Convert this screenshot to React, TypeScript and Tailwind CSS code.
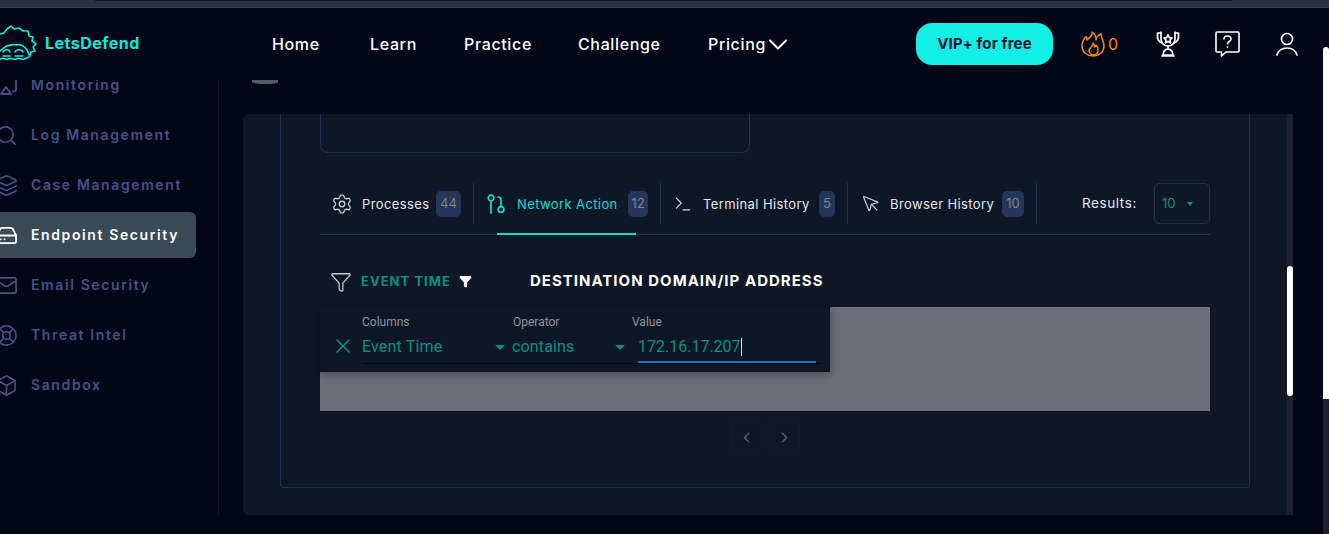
import { Box, ChevronLeft, ChevronRight, Filter, HardDrive, Layers, LifeBuoy, Mail, MousePointer, Search, Settings, Terminal, X } from "lucide-react";
import type { ReactNode } from "react";

const montserrat = "font-['Inter','Liberation_Sans',sans-serif]";

function Logo() {
  return (
    <svg width="38" height="40" viewBox="0 0 38 40" fill="none" stroke="#0fe8d8" strokeWidth="1.6" strokeLinejoin="round" strokeLinecap="round" className="mt-[-4px] shrink-0">
      <path d="M0 13 L4 12 L7 8 L11 5 L14 8 L19 7 L23 10 L28 10 L29 15 L33 16 L32 20 L36 23 L33 26 L35 30 L31 31 L30 35" />
      <path d="M0 30 C6 24 12 23 16 24 C22 22 28 28 29 34" />
      <path d="M3 31 C4 28 9 28 10 31 M3 35 H10 M15 31 C16 28 22 28 23 31 M15 35 H23" />
      <path d="M0 38 C3 36 5 39 8 38 C10 36 13 39 16 38 C18 36 21 39 24 38 L29 36" />
    </svg>
  );
}

function NetworkIcon() {
  return (
    <svg width="18" height="20" viewBox="0 0 18 20" fill="none" stroke="#0fdcd0" strokeWidth="1.7" strokeLinecap="round" className="shrink-0">
      <circle cx="4" cy="4" r="2.8" />
      <path d="M4 7v12" />
      <circle cx="14" cy="15.5" r="2.8" />
      <path d="M14 12.5V6c0-2-1-3-3-3" />
    </svg>
  );
}

function FlameIcon() {
  return (
    <svg width="24" height="26" viewBox="0 0 24 26" fill="none" stroke="#f08a1d" strokeWidth="1.5" strokeLinejoin="round" className="shrink-0">
      <path d="M11 1C12 5 8 7 6 9C6 7 5.500 6 5 5.500C2 9 1 12 1 15C1 21 6 25 12 25C18 25 23 21 23 15C23 10 20 7 20 3C17 4 15 7 15 9C15 6 14 3 11 1Z" />
      <path d="M12 12C13 15 9 16 8 19C8 22 10 24 12 24C15 24 17 22 17 19C17 17 16 15 15 14C15 15 14 16 13.500 16C14 14 13 13 12 12Z" />
    </svg>
  );
}

function TrophyIcon() {
  return (
    <svg width="24" height="26" viewBox="0 0 24 26" fill="none" stroke="#fff" strokeWidth="1.7" strokeLinejoin="round" strokeLinecap="round">
      <path d="M5 1v7c0 4 3 7 7 7s7-3 7-7V1" />
      <path d="M5 2H1.500v4c0 3 2 5 4.500 6M19 2h3.500v4c0 3-2 5-4.500 6" />
      <path d="M12 4l1.300 2.600 2.700.4-2 2 .5 2.800L12 10.500 9.500 11.800l.5-2.800-2-2 2.700-.4z" />
      <path d="M12 15v3M7 24c0-3 2-6 5-6s5 3 5 6zM6 25h12" />
    </svg>
  );
}

function QuestionIcon() {
  return (
    <svg width="25" height="26" viewBox="0 0 25 26" fill="none" stroke="#fff" strokeWidth="1.600" strokeLinejoin="round" strokeLinecap="round">
      <path d="M2 1h21a1 1 0 0 1 1 1v18a1 1 0 0 1-1 1H11l-4.500 4v-4H2a1 1 0 0 1-1-1V2a1 1 0 0 1 1-1z" />
      <path d="M9 8c0-2 1.500-3 3.500-3s3.500 1.200 3.500 3c0 2.500-3.500 2.500-3.500 5" />
      <path d="M12.500 16v.5" />
    </svg>
  );
}

function UserIcon() {
  return (
    <svg width="22" height="24" viewBox="0 0 22 24" fill="none" stroke="#fff" strokeWidth="1.700" strokeLinecap="round">
      <circle cx="11" cy="7" r="5.500" />
      <path d="M1 23c1.500-5 5-7 10-7s8.500 2 10 7" />
    </svg>
  );
}

function MonitoringIcon() {
  return (
    <svg width="20" height="20" viewBox="0 0 20 20" fill="none" stroke="#3f5488" strokeWidth="1.800" strokeLinejoin="round" strokeLinecap="round" className="shrink-0">
      <path d="M4 19l5-7 5 7zM19 5v10c0 1-1 1.500-3 1.500" />
    </svg>
  );
}

const navItems = [
  { label: "Home", width: "w-[50px]" },
  { label: "Learn", width: "w-[46px]" },
  { label: "Practice", width: "w-[66px]" },
  { label: "Challenge", width: "w-[82px]" },
];

const sideItems: { label: string; icon: ReactNode; active?: boolean }[] = [
  { label: "Monitoring", icon: <MonitoringIcon /> },
  { label: "Log Management", icon: <Search size={23} strokeWidth={1.7} /> },
  { label: "Case Management", icon: <Layers size={23} strokeWidth={1.7} /> },
  { label: "Endpoint Security", icon: <HardDrive size={23} strokeWidth={1.9} />, active: true },
  { label: "Email Security", icon: <Mail size={23} strokeWidth={1.7} /> },
  { label: "Threat Intel", icon: <LifeBuoy size={23} strokeWidth={1.7} /> },
  { label: "Sandbox", icon: <Box size={23} strokeWidth={1.7} /> },
];

function Tab({ icon, label, count, iconWidth, textWidth, badgeWidth, gapBefore, active }: { icon: ReactNode; label: string; count: number; iconWidth: string; textWidth: string; badgeWidth: string; gapBefore: string; active?: boolean }) {
  return (
    <div className={`relative flex h-[41px] items-center border-r border-[#1f3350] ${gapBefore}`}>
      <div className={`flex items-center ${iconWidth}`}>{icon}</div>
      <span className={`pt-[2px] text-[13px] tracking-[0.03em] whitespace-nowrap ${textWidth} ${active ? "text-[#0fdcd0]" : "text-[#e4e7ec]"}`}>{label}</span>
      <span className={`flex h-[26px] items-center justify-center rounded-[5px] bg-[#24375a] text-[13px] text-[#7f838c] ${badgeWidth}`}>{count}</span>
      {active && <div className="absolute bottom-[-11px] left-[23px] h-[2px] w-[139px] bg-[#0fdcd0]" />}
    </div>
  );
}

export default function App() {
  return (
    <div className={`flex h-[534px] w-[1329px] flex-col overflow-hidden bg-[#030617] ${montserrat}`}>
      <div className="h-[8px] shrink-0 border-b border-[#3a3f4d] bg-[#2c303d] pl-[95px] pr-[97px]">
        <div className="h-[1px] bg-[#14161f]" />
      </div>
      <div className="flex min-h-0 flex-1">
        <div className="flex min-w-0 flex-1 flex-col">
          <header className="relative z-10 flex h-[72px] shrink-0 items-center bg-[#030617]">
            <div className="flex w-[272px] shrink-0 items-center gap-[7px] self-stretch pb-[3px]">
              <Logo />
              <span className="text-[16px] font-bold tracking-[0.03em] text-[#0fe8d8]">LetsDefend</span>
            </div>
            <nav className="flex flex-1 items-center gap-[48px] text-[16px] font-medium tracking-[0.04em] text-white">
              {navItems.map((item) => (
                <span key={item.label} className={`whitespace-nowrap ${item.width}`}>{item.label}</span>
              ))}
              <span className="flex items-center gap-[4px]">
                <span className="w-[57px]">Pricing</span>
                <svg width="18" height="11" viewBox="0 0 18 11" fill="none" stroke="#fff" strokeWidth="2" strokeLinecap="round" strokeLinejoin="round">
                  <path d="M1 1.500L9 9.500L17 1.500" />
                </svg>
              </span>
            </nav>
            <button className="flex h-[42px] w-[137px] shrink-0 items-center justify-center rounded-[16px] bg-[#12efe4] text-[15px] font-bold tracking-[0.01em] text-[#0a1530]">
              VIP+ for free
            </button>
            <div className="ml-[28px] flex w-[38px] shrink-0 items-center gap-[3px] text-[16px] text-[#f08a1d]">
              <FlameIcon />
              <span>0</span>
            </div>
            <div className="ml-[37px] flex shrink-0 items-center">
              <TrophyIcon />
              <div className="ml-[35px]"><QuestionIcon /></div>
              <div className="ml-[36px] mr-[25px]"><UserIcon /></div>
            </div>
          </header>

          <div className="flex min-h-0 flex-1">
            <aside className="mb-[19px] w-[219px] shrink-0 border-r border-[#0e1726]">
              <div className="mt-[-20px]">
                {sideItems.map((item) => (
                  <div key={item.label} className="h-[50px] py-[2px]">
                    <div className={`flex h-[46px] w-[196px] items-center gap-[13px] rounded-r-[6px] ${item.active ? "bg-[#3a4a57] text-white" : "text-[#3f5488]"}`}>
                      <span className="ml-[-5px] flex w-[23px] shrink-0 justify-center">{item.icon}</span>
                      <span className="pb-[2px] text-[14px] font-semibold tracking-[0.115em] whitespace-nowrap">{item.label}</span>
                    </div>
                  </div>
                ))}
              </div>
            </aside>

            <main className="flex min-w-0 flex-1 flex-col pl-[24px] pr-[30px]">
              <div className="h-[34px] shrink-0">
                <div className="ml-[9px] h-[4px] w-[26px] rounded-b-[100%] bg-[#565965]" />
              </div>
              <div className="mb-[19px] flex min-h-0 flex-1 overflow-hidden rounded-l-[6px] bg-[#0e1726]">
                <div className="min-w-0 flex-1 pl-[37px] pr-[37px]">
                  <div className="h-[374px] rounded-b-[4px] border-x border-b border-[#1f3350] px-[39px]">
                    <div className="h-[39px] w-[430px] rounded-b-[8px] border-x border-b border-[#1f3350]" />

                    <div className="mt-[30px] flex h-[52px] items-start border-b border-[#1f3350]">
                      <Tab icon={<Settings size={22} strokeWidth={1.5} className="text-[#c6cad1]" />} label="Processes" count={44} gapBefore="pl-[11px] pr-[12px]" iconWidth="w-[31px]" textWidth="w-[74px]" badgeWidth="w-[25px]" />
                      <Tab icon={<NetworkIcon />} label="Network Action" count={12} active gapBefore="pl-[13px] pr-[12px]" iconWidth="w-[30px]" textWidth="w-[111px]" badgeWidth="w-[20px]" />
                      <Tab icon={<Terminal size={20} strokeWidth={1.5} className="text-[#d5d8de]" />} label="Terminal History" count={5} gapBefore="pl-[12px] pr-[12px]" iconWidth="w-[30px]" textWidth="w-[116px]" badgeWidth="w-[16px]" />
                      <Tab icon={<MousePointer size={20} strokeWidth={1.5} className="text-[#c6cad1]" />} label="Browser History" count={10} gapBefore="pl-[13px] pr-[12px]" iconWidth="w-[29px]" textWidth="w-[112px]" badgeWidth="w-[22px]" />
                      <span className="ml-auto flex h-[41px] items-center text-[13.500px] tracking-[0.045em] text-[#e4e7ec]">Results:</span>
                      <div className="ml-[17px] flex h-[41px] w-[56px] items-center rounded-[5px] border border-[#1f3350] pl-[7px] text-[13px] text-[#0b8f80]">
                        10
                        <span className="ml-[11px] mt-[1px] h-0 w-0 border-x-[3.500px] border-t-[4px] border-x-transparent border-t-[#0b8f80]" />
                      </div>
                    </div>

                    <div className="flex h-[72px] items-center pl-[10px] pt-[21px]">
                      <Filter size={22} strokeWidth={1.4} className="text-[#c6cad1]" />
                      <span className="ml-[9px] text-[13px] font-bold tracking-[0.08em] whitespace-nowrap text-[#0b8f80]">EVENT TIME</span>
                      <Filter size={13} fill="#fff" className="ml-[8px] text-white" />
                      <span className="ml-[58px] text-[15px] font-bold tracking-[0.068em] whitespace-nowrap text-white">DESTINATION DOMAIN/IP ADDRESS</span>
                    </div>

                    <div className="relative h-[104px] bg-[#6b6e78]">
                      <div className="absolute left-0 top-0 flex h-[65px] w-[510px] items-start bg-[#0e1726] pt-[8px] font-['Roboto',sans-serif] shadow-[0_2px_8px_rgba(0,0,0,0.35)]">
                        <div className="mt-[19px] flex h-[24px] w-[42px] items-center pl-[11px]">
                          <X size={24} strokeWidth={1.5} className="shrink-0 text-[#0b8f80]" />
                        </div>
                        <div className="relative w-[150px] border-b border-[#05080f]">
                          <div className="text-[12px] leading-[14px] text-[#8e93a0]">Columns</div>
                          <div className="mt-[5px] flex h-[29px] items-center pb-[4px] text-[16px] tracking-[0.01em] text-[#0b8f80]">Event Time</div>
                          <span className="absolute right-[7px] top-[30px] h-0 w-0 border-x-[5px] border-t-[5px] border-x-transparent border-t-[#0b8f80]" />
                        </div>
                        <div className="relative w-[120px] border-b border-[#05080f]">
                          <div className="pl-[1px] text-[12px] leading-[14px] text-[#8e93a0]">Operator</div>
                          <div className="mt-[5px] flex h-[29px] items-center pb-[4px] text-[16px] tracking-[0.01em] text-[#0b8f80]">contains</div>
                          <span className="absolute right-[7px] top-[30px] h-0 w-0 border-x-[5px] border-t-[5px] border-x-transparent border-t-[#0b8f80]" />
                        </div>
                        <div className="w-[190px] border-b border-[#05080f]">
                          <div className="text-[12px] leading-[14px] text-[#8e93a0]">Value</div>
                          <div className="ml-[6px] mr-[6px] mt-[5px] flex h-[29px] items-center border-b-2 border-[#1f6fc4] pb-[2px] text-[16px] text-[#0b8f80]">
                            172.16.17.207
                            <span className="h-[18px] w-px bg-[#d8dde4]" />
                          </div>
                        </div>
                      </div>
                    </div>

                    <div className="ml-[411px] mt-[11px] flex gap-[7px] text-[#596170]">
                      <div className="flex h-[30px] w-[31px] items-center justify-center rounded-[3px] border border-[#121a28]"><ChevronLeft size={17} strokeWidth={2} /></div>
                      <div className="flex h-[30px] w-[31px] items-center justify-center rounded-[3px] border border-[#121a28]"><ChevronRight size={17} strokeWidth={2} /></div>
                    </div>
                  </div>
                </div>
                <div className="w-[6px] shrink-0 bg-[#1e2030] pt-[152px]">
                  <div className="h-[130px] rounded-[3px] bg-white" />
                </div>
              </div>
            </main>
          </div>
        </div>
        <div className="w-[6px] shrink-0 pt-[39px]">
          <div className="h-[355px] rounded-[3px] bg-white" />
          <div className="mt-[-3px] h-[140px] bg-[#1e2030]" />
        </div>
      </div>
    </div>
  );
}
